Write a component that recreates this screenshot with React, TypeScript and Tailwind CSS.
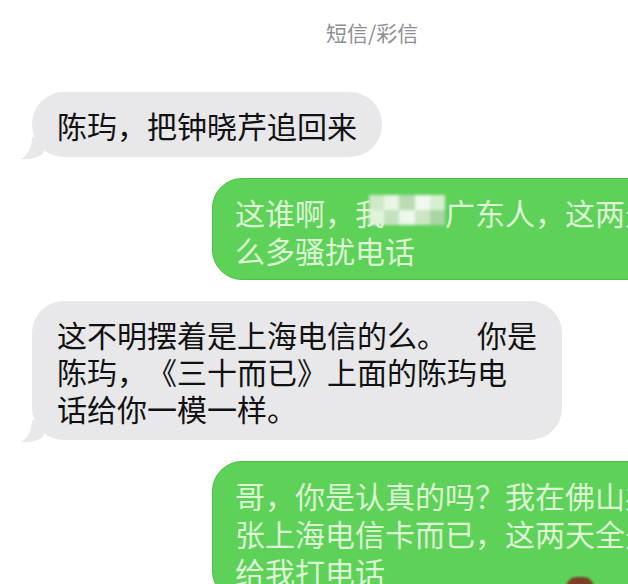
import React from "react";

function Tail() {
  return (
    <svg
      className="absolute left-[-12px] bottom-[-4px]"
      width="26"
      height="24"
      viewBox="0 0 26 24"
    >
      <path d="M12 0 C12 9 9 17 1 22 C9 23 17 21 23 17 L26 4 Z" fill="#e8e8eb" />
    </svg>
  );
}

function Mosaic() {
  const cells = [
    "#cfe8c8", "#e9f5e5", "#b9dab2", "#f1f8ef", "#d8eed2",
    "#e2f2dd", "#c4e2bd", "#eef7ec", "#cbe6c4", "#a9d6a2",
  ];
  return (
    <span className="relative top-[2px] inline-grid grid-cols-5 ml-[-16px] w-[76px] h-[30px] align-top blur-[1.5px]">
      {cells.map((c, i) => (
        <span key={i} style={{ backgroundColor: c }} />
      ))}
    </span>
  );
}

function Received({ children }: { children: React.ReactNode }) {
  return (
    <div className="relative rounded-[32px] bg-[#e8e8eb] px-[25px] pt-[15px] pb-[13px] text-[30px] leading-[37px] text-[#111] whitespace-nowrap">
      {children}
      <Tail />
    </div>
  );
}

function Sent({ children }: { children: React.ReactNode }) {
  return (
    <div className="ml-[180px] w-[560px] rounded-[30px] border border-[#50bd4a] bg-[#5ed158] pl-[22px] pt-[14px] pb-[10px] text-[30px] leading-[38px] text-[#dcf5d4] whitespace-nowrap">
      {children}
    </div>
  );
}

export default function App() {
  return (
    <div className="relative flex flex-col w-[628px] h-[584px] overflow-hidden bg-white font-['Noto_Sans_CJK_SC',sans-serif] [text-spacing-trim:space-all]">
      <div className="pt-[18px] pl-[326px] text-[21px] leading-[29px] text-[#8e8e93]">
        短信/彩信
      </div>

      <div className="flex flex-col items-start gap-[21px] mt-[45px] pl-[32px]">
        <Received>陈玙，把钟晓芹追回来</Received>

        <Sent>
          这谁啊，我<Mosaic />广东人，这两天怎么这
          <br />
          么多骚扰电话
        </Sent>

        <Received>
          这不明摆着是上海电信的么。　你是
          <br />
          陈玙，《三十而已》上面的陈玙电
          <br />
          话给你一模一样。
        </Received>

        <Sent>
          哥，你是认真的吗？我在佛山办了一
          <br />
          张上海电信卡而已，这两天全是人
          <br />
          给我打电话
        </Sent>
      </div>

      <div className="absolute left-[566px] top-[577px] w-[28px] h-[22px] rounded-full bg-[#7a3f26] blur-[1px]" />
    </div>
  );
}
